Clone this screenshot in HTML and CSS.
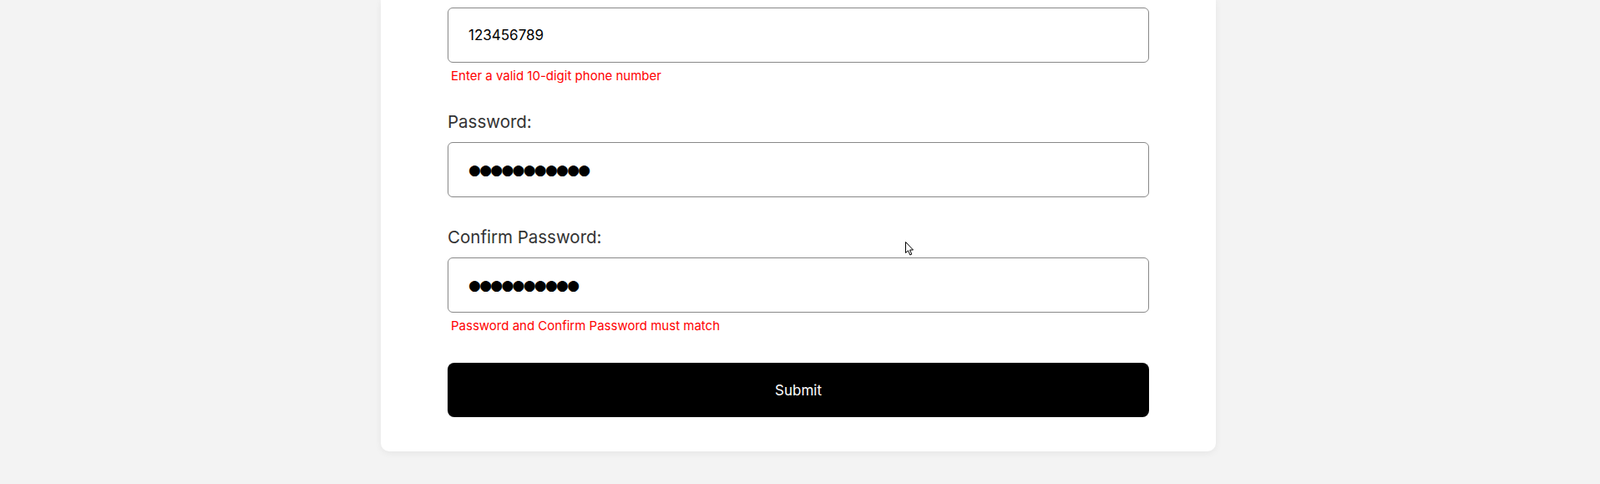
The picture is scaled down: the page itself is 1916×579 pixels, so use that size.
FILE: index.html
```html
<!DOCTYPE html>
<html lang="en">
<head>
<meta charset="utf-8">
<title>Register</title>
<link rel="stylesheet" href="styles.css">
</head>
<body>
<div class="page">
  <form class="card">
    <div class="group">
      <input class="field" type="text" value="123456789" readonly>
      <div class="error">Enter a valid 10-digit phone number</div>
    </div>
    <div class="group">
      <label class="label">Password:</label>
      <input class="field pw" type="text" value="●●●●●●●●●●●" readonly>
    </div>
    <div class="group group-last">
      <label class="label">Confirm Password:</label>
      <input class="field pw" type="text" value="●●●●●●●●●●" readonly>
      <div class="error">Password and Confirm Password must match</div>
    </div>
    <button class="submit" type="button">Submit</button>
  </form>
</div>
<svg class="cursor" width="12" height="18" viewBox="0 0 12 18"><path d="M0.5 0.5 L0.5 13.5 L3.5 10.8 L5.8 16 L7.8 15.1 L5.6 10 L9.5 10 Z" fill="#fff" stroke="#000" stroke-width="1"/></svg>
</body>
</html>
```
FILE: styles.css
```css
html, body {
  margin: 0;
  padding: 0;
  background: #f3f3f3;
  font-family: Inter, "Noto Sans", sans-serif;
}
.page {
  display: flex;
  justify-content: center;
  min-height: 579px;
  padding-right: 4px;
}
.card {
  width: 1000px;
  box-sizing: border-box;
  background: #fff;
  padding: 9px 80px 41px;
  border-radius: 0 0 10px 10px;
  box-shadow: 0 2px 8px rgba(0,0,0,0.06);
  align-self: flex-start;
}
.group {
  margin-bottom: 34px;
}
.group:has(.error) {
  margin-bottom: 31px;
}
.group.group-last {
  margin-bottom: 34px;
}
.label {
  display: block;
  font-size: 20.5px;
  line-height: 28px;
  color: #333;
  margin-bottom: 10px;
}
.field {
  display: block;
  width: 100%;
  height: 66px;
  box-sizing: border-box;
  border: 1px solid #888;
  border-radius: 6px;
  padding: 0 24px;
  font-family: inherit;
  font-size: 17px;
  color: #000;
  background: #fff;
  outline: none;
}
.pw {
  font-family: "DejaVu Sans", sans-serif;
  font-size: 17px;
  letter-spacing: -1.7px;
}
.error {
  color: #ff0000;
  font-size: 15px;
  line-height: 20px;
  margin-top: 6px;
  padding-left: 4px;
}
.submit {
  display: block;
  width: 100%;
  height: 65px;
  border: none;
  border-radius: 8px;
  background: #000;
  color: #fff;
  font-family: inherit;
  font-size: 17px;
}
.cursor {
  position: absolute;
  left: 1084px;
  top: 289px;
}
```
